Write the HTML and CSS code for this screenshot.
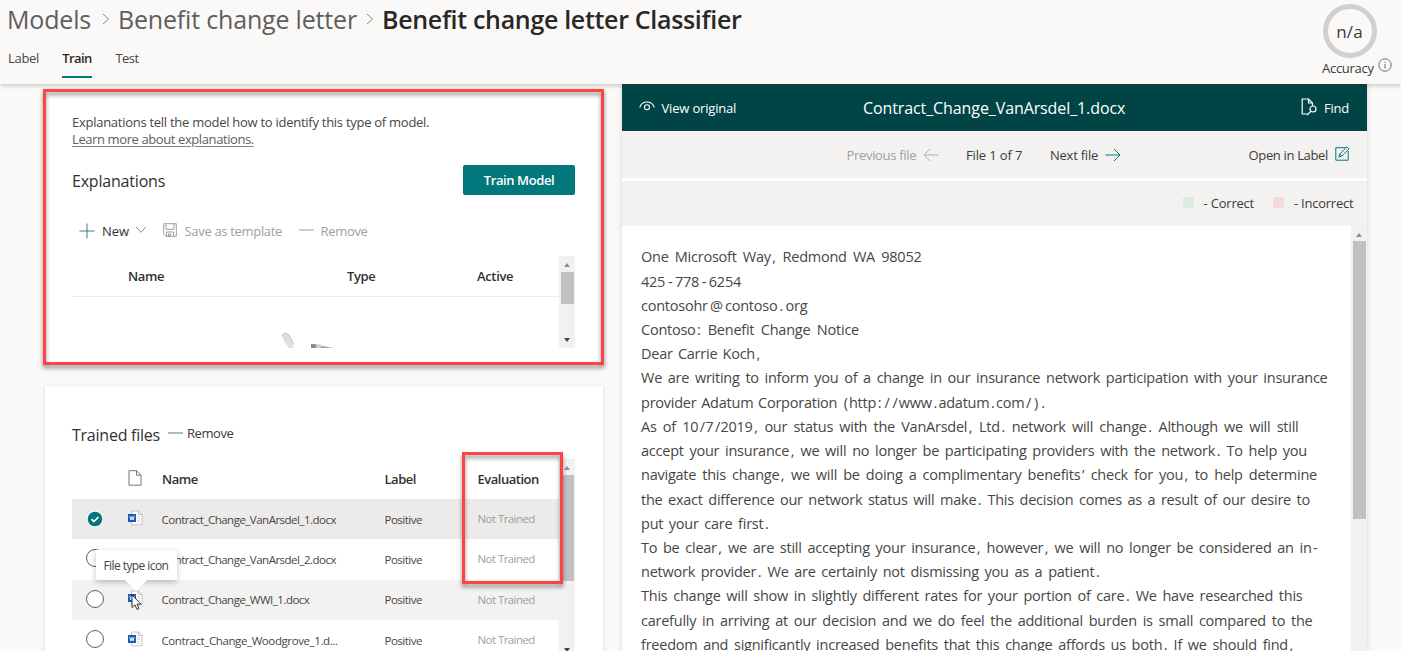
FILE: index.html
```
<!DOCTYPE html>
<html lang="en">
<head>
<meta charset="utf-8">
<title>Benefit change letter Classifier</title>
<link rel="stylesheet" href="styles.css">
</head>
<body>
<svg class="defs" width="0" height="0">
  <symbol id="word" viewBox="0 0 16 16">
    <path d="M4.500 1h7l3.500 3.500v10.300h-10.500z" fill="#fff" stroke="#b5b3b1" stroke-width=".8"/>
    <path d="M11.500 1v3.500h3.500" fill="none" stroke="#b5b3b1" stroke-width=".8"/>
    <path d="M10 6.500h3M10 8.500h3M10 10.500h3M10 12.500h3" stroke="#c8c6c4" stroke-width=".6"/>
    <rect x="1" y="4" width="8" height="8" fill="#185abd"/>
    <path d="M2.800 6l1.100 4L5 6.500 6.100 10l1.100-4" fill="none" stroke="#fff" stroke-width=".9"/>
  </symbol>
</svg>

<header class="top">
  <div class="top-left">
    <nav class="crumbs">
      <span class="crumb c-models">Models</span>
      <svg class="chev" viewBox="0 0 8 12"><path d="M1 1l5.500 5L1 11"/></svg>
      <span class="crumb c-letter">Benefit change letter</span>
      <svg class="chev" viewBox="0 0 8 12"><path d="M1 1l5.500 5L1 11"/></svg>
      <span class="crumb current">Benefit change letter Classifier</span>
    </nav>
    <div class="tabs">
      <span class="tab t-label">Label</span>
      <span class="tab t-train active">Train</span>
      <span class="tab t-test">Test</span>
    </div>
  </div>
  <div class="accuracy">
    <div class="ring">n/a</div>
    <div class="acc-row"><span>Accuracy</span>
      <svg class="info" viewBox="0 0 14 14"><circle cx="7" cy="7" r="6.200"/><path d="M7 6v4.500M7 3.600v1.200"/></svg>
    </div>
  </div>
</header>

<main class="page">
  <div class="left">
    <section class="card explain">
      <p class="intro">Explanations tell the model how to identify this type of model.</p>
      <p class="learn"><a>Learn more about explanations.</a></p>
      <div class="head"><h2>Explanations</h2><button class="train">Train Model</button></div>
      <div class="tools">
        <svg class="plus" viewBox="0 0 16 16"><path d="M8 .5v15M.5 8h15"/></svg>
        <span class="new">New</span>
        <svg class="down" viewBox="0 0 12 8"><path d="M1 1l5 5.300L11 1"/></svg>
        <svg class="save" viewBox="0 0 14 14"><path d="M.7.7h12.600v12.600H2.700l-2-2zM3 .7v5.600h8V.7M3.500 13.300V9h7v4.300M5.500 11v2.300h2V11z"/></svg>
        <span class="dis tmpl">Save as template</span>
        <svg class="minus grey" viewBox="0 0 15 2"><path d="M0 1h15"/></svg>
        <span class="dis rem">Remove</span>
      </div>
      <div class="xtable">
        <div class="xbody">
          <div class="xhead"><span>Name</span><span>Type</span><span>Active</span></div>
          <svg class="art" viewBox="0 0 64 17">
            <path d="M1 3.500C1 1 6 0 8 3l5 10-1 .5L9 8l4 9H9C5 13 2 8 1 3.500z" fill="#e1dfdd"/>
            <path d="M1 4C1 1 6 .5 8 3l5 9.500" fill="none" stroke="#b9b6b3" stroke-width=".8"/>
            <path d="M31 12l27 5H30z" fill="#aaa4a0"/>
            <path d="M30 12l5 .5-1 4.500h-4z" fill="#8a8886"/><path d="M36 12l4 .5v4.500h-5z" fill="#d2d0ce"/>
          </svg>
        </div>
        <div class="bar xbar"><i class="up"></i><b></b><i class="dn"></i></div>
      </div>
      <div class="mark mark-card"></div>
    </section>

    <section class="card files">
      <div class="fhead"><h2>Trained files</h2>
        <svg class="minus" viewBox="0 0 15 2"><path d="M0 1h15"/></svg><span class="frem">Remove</span></div>
      <div class="ftable">
        <div class="rows">
          <div class="row hrow"><span></span><span class="ic"><svg class="doc" viewBox="0 0 14 16"><path d="M1 .7h7.500l4.500 4.500v10H1zM8.500.7v4.500H13"/></svg></span><span>Name</span><span>Label</span><span class="ev">Evaluation</span></div>
          <div class="row sel"><span class="ck"><svg viewBox="0 0 18 18"><circle cx="9" cy="9" r="8.200" fill="#fff"/><circle cx="9" cy="9" r="7.300" fill="#03787c"/><path d="M5.500 9.200l2.400 2.400 4.600-4.600" fill="none" stroke="#fff" stroke-width="1.700"/></svg></span><span class="ic"><svg class="word"><use href="#word"/></svg></span><span class="fn">Contract_Change_VanArsdel_1.docx</span><span class="lb">Positive</span><span class="nt">Not Trained</span></div>
          <div class="row"><span class="ck"><em></em></span><span class="ic"><svg class="word"><use href="#word"/></svg></span><span class="fn">Contract_Change_VanArsdel_2.docx</span><span class="lb">Positive</span><span class="nt">Not Trained</span></div>
          <div class="row hov"><span class="ck"><em></em></span><span class="ic"><svg class="word"><use href="#word"/></svg></span><span class="fn">Contract_Change_WWI_1.docx</span><span class="lb">Positive</span><span class="nt">Not Trained</span>
            <div class="tip">File type icon</div>
            <svg class="cursor" viewBox="0 0 11 17"><path d="M1 1v12.500l3-2.700 2 4.700 2-.9-2-4.500h4z" fill="#fff" stroke="#222" stroke-width=".9"/></svg>
          </div>
          <div class="row"><span class="ck"><em></em></span><span class="ic"><svg class="word"><use href="#word"/></svg></span><span class="fn wood">Contract_Change_Woodgrove_1.d...</span><span class="lb">Positive</span><span class="nt">Not Trained</span></div>
        </div>
        <div class="bar fbar"><i class="up"></i><b></b><i class="dn"></i></div>
        <div class="mark mark-eval"></div>
      </div>
    </section>
  </div>

  <section class="viewer">
    <div class="vhead">
      <svg class="eye" viewBox="0 0 16 10"><path d="M.7 6.500C3-.8 13-.8 15.300 6.500"/><circle cx="8" cy="6.200" r="2.500"/></svg>
      <span class="vo">View original</span>
      <span class="vt">Contract_Change_VanArsdel_1.docx</span>
      <svg class="find" viewBox="0 0 17 18"><path d="M6.500 16H1.200V1h6.300l4 4v3M7.500 1v4h4"/><circle cx="12" cy="11" r="3"/><path d="M9.900 13.200L6.200 17"/></svg>
      <span class="vf">Find</span>
    </div>
    <div class="vnav">
      <span class="pf">Previous file</span>
      <svg class="arr off" viewBox="0 0 16 14"><path d="M15.500 7H1M7 1L1 7l6 6"/></svg>
      <span class="fo">File 1 of 7</span>
      <span class="nf">Next file</span>
      <svg class="arr" viewBox="0 0 16 14"><path d="M.5 7H15M9 1l6 6-6 6"/></svg>
      <span class="ol">Open in Label</span>
      <svg class="edit" viewBox="0 0 15 15"><path d="M10.500 1.700H.8v12.500h12.400V5M4 11l.8-3L12 .9l2 2L6.900 10zM4.800 8l2.100 2"/></svg>
    </div>
    <div class="legend"><i class="g"></i><span class="lc">- Correct</span><i class="r"></i><span class="li">- Incorrect</span></div>
    <div class="vbody">
      <div class="text">
        <p>One Microsoft Way<i>,</i> Redmond WA 98052</p>
        <p>425<i>-</i>778<i>-</i>6254</p>
        <p>contosohr<i>@</i>contoso<i>.</i>org</p>
        <p>Contoso<i>:</i> Benefit Change Notice</p>
        <p>Dear Carrie Koch<i>,</i></p>
        <p>We are writing to inform you of a change in our insurance network participation with your insurance</p>
        <p>provider Adatum Corporation <i>(</i>http<i>:</i><i>/</i><i>/</i>www<i>.</i>adatum<i>.</i>com<i>/</i><i>)</i><i>.</i></p>
        <p>As of 10<i>/</i>7<i>/</i>2019<i>,</i> our status with the VanArsdel<i>,</i> Ltd<i>.</i> network will change<i>.</i> Although we will still</p>
        <p>accept your insurance<i>,</i> we will no longer be participating providers with the network<i>.</i> To help you</p>
        <p>navigate this change<i>,</i> we will be doing a complimentary benefits<i>’</i> check for you<i>,</i> to help determine</p>
        <p>the exact difference our network status will make<i>.</i> This decision comes as a result of our desire to</p>
        <p>put your care first<i>.</i></p>
        <p>To be clear<i>,</i> we are still accepting your insurance<i>,</i> however<i>,</i> we will no longer be considered an in<i>-</i></p>
        <p>network provider<i>.</i> We are certainly not dismissing you as a patient<i>.</i></p>
        <p>This change will show in slightly different rates for your portion of care<i>.</i> We have researched this</p>
        <p>carefully in arriving at our decision and we do feel the additional burden is small compared to the</p>
        <p>freedom and significantly increased benefits that this change affords us both<i>.</i> If we should find<i>,</i></p>
      </div>
      <div class="bar vbar"><i class="up"></i><b></b></div>
    </div>
  </section>
</main>
</body>
</html>
```
FILE: styles.css
```
* { box-sizing: border-box; }
body { margin: 0; width: 1401px; height: 651px; overflow: hidden; background: #faf9f8; color: #3b3a39; font: 13px/18px "Open Sans", sans-serif; white-space: nowrap; }
p, h2 { margin: 0; }
svg { flex: none; display: block; fill: none; overflow: visible; }
.defs { position: absolute; }

.top { position: relative; z-index: 2; height: 84px; display: flex; justify-content: space-between; padding: 0 8px; background: #faf9f8; box-shadow: 0 2px 4px rgba(0,0,0,.18); }
.crumbs { display: flex; align-items: center; height: 40px; font-size: 25px; line-height: 40px; color: #605e5c; }
.crumb { flex: none; margin-top: -2px; }
.c-models { width: 95px; margin-left: -1px; letter-spacing: -.18px; }
.c-letter { width: 248px; letter-spacing: -.18px; }
.current { font-weight: 600; letter-spacing: -.32px; color: #292827; }
.chev { width: 8px; height: 12px; margin-top: -3px; stroke: #8a8886; stroke-width: 1; }
.chev + .crumb { margin-left: 8px; }
.tabs { display: flex; height: 38px; line-height: 36px; color: #484644; }
.tab { flex: none; letter-spacing: -.3px; }
.t-label { width: 54px; }
.t-train { width: 30px; text-align: center; font-weight: 600; letter-spacing: -.6px; color: #292827; border-bottom: 2px solid #03787c; }
.t-test { margin-left: 23.500px; letter-spacing: -.55px; }
.accuracy { width: 72px; }
.ring { width: 54px; height: 54px; margin: 4px 0 0 1.500px; border: 5px solid #d2d0ce; border-radius: 50%; text-align: center; font-size: 17px; line-height: 46px; letter-spacing: .1px; }
.acc-row { display: flex; align-items: center; height: 19px; letter-spacing: -.28px; padding-left: 1px; }
.acc-row span { width: 56px; }
.info { width: 14px; height: 14px; margin-top: -5px; stroke: #605e5c; stroke-width: .9; }

.page { display: flex; align-items: flex-start; padding-left: 45px; height: 567px; }
.left { width: 558px; margin-right: 19px; }
.card { position: relative; background: #fff; box-shadow: 0 1px 4px rgba(0,0,0,.14); padding: 0 28px 0 27px; }
.explain { margin-top: 6px; height: 273px; padding-top: 23px; }
.intro { letter-spacing: -.27px; line-height: 18px; color: #484644; }
.learn { letter-spacing: -.4px; line-height: 17px; color: #605e5c; }
.learn a { text-decoration: underline; text-decoration-color: #8a8886; text-underline-offset: 2px; }
h2 { font-size: 16px; font-weight: 400; letter-spacing: -.2px; line-height: 24px; color: #323130; }
.head { display: flex; align-items: center; justify-content: space-between; height: 30px; margin-top: 17px; }
.head h2 { margin-top: 2px; }
.train { width: 112px; height: 30px; border: 0; border-radius: 2px; background: #03787c; color: #fff; font: 600 13px/31px "Open Sans", sans-serif; letter-spacing: -.4px; padding: 0; }
.tools { display: flex; align-items: center; height: 20px; margin-top: 26px; padding-left: 7px; }
.plus { width: 16px; height: 16px; stroke: #3c7e80; stroke-width: 1; }
.new { width: 26px; margin-left: 7px; color: #323130; letter-spacing: -.1px; }
.down { width: 12px; height: 8px; margin: -3px 0 0 7px; stroke: #8a8886; }
.save { width: 14px; height: 14px; margin: -2px 0 0 16px; stroke: #a19f9d; }
.dis { color: #a19f9d; letter-spacing: -.32px; }
.tmpl { width: 98px; margin-left: 7.500px; }
.minus { width: 15px; height: 2px; stroke: #4f8586; stroke-width: 1; margin-top: -3px; }
.grey { stroke: #a19f9d; margin-left: 16px; }
.rem { margin-left: 7px; }
.xtable { display: flex; height: 92px; margin-top: 15px; }
.xbody { width: 487px; overflow: hidden; }
.xhead { display: grid; grid-template-columns: 219px 130px 1fr; padding-left: 56px; height: 41px; line-height: 40px; border-bottom: 1px solid #edebe9; font-weight: 600; letter-spacing: -.35px; color: #323130; }
.art { width: 64px; height: 17px; margin: 35px 0 0 209px; }

.bar { display: flex; flex-direction: column; align-items: center; background: #f1f1f1; flex: none; width: 16px; }
.bar b { width: 13px; background: #c1c1c1; }
.up, .dn { width: 0; height: 0; border: 3.500px solid transparent; }
.up { border-top: 0; border-bottom: 4px solid #8f8f8f; margin: 7px 0 5px; }
.dn { border-bottom: 0; border-top: 4px solid #444; margin: auto 0 6px; }
.xbar b { height: 32px; }
.mark { position: absolute; border: 3px solid #fd4344; filter: drop-shadow(0 3px 2px rgba(0,0,0,.45)); z-index: 3; }
.mark-card { left: -2px; top: -1px; width: 561px; height: 276px; }

.files { margin-top: 23px; height: 290px; padding-top: 36px; }
.fhead { display: flex; align-items: center; height: 24px; }
.fhead h2 { width: 96px; letter-spacing: -.24px; margin-top: 1px; }
.frem { margin-left: 4px; margin-top: -2px; letter-spacing: -.45px; }
.ftable { position: relative; display: flex; height: 197px; margin-top: 13px; }
.rows { width: 487px; }
.row { position: relative; display: grid; grid-template-columns: 46px 44px 222.500px 93px 1fr; align-items: center; height: 40.300px; font-size: 11.500px; letter-spacing: -.47px; color: #484644; }
.hrow { height: 40px; line-height: 38px; font-size: 13px; font-weight: 600; letter-spacing: -.48px; color: #323130; }
.sel { background: #edebe9; }
.hov { background: #f3f2f1; }
.row .ck, .row .ic { display: flex; justify-content: center; }
.row .ic { width: 34px; margin-top: -3px; }
.row .fn, .row .lb { padding-top: 1px; }
.row .fn { letter-spacing: -.51px; margin-left: -.5px; }
.row .wood { letter-spacing: -.4px; }
.hrow .ic { margin-top: 0; }
.ck svg { width: 18px; height: 18px; }
.ck em { width: 18px; height: 18px; margin-top: -2px; border: 1px solid #605e5c; border-radius: 50%; background: #fff; }
.word { width: 16px; height: 16px; }
.doc { width: 14px; height: 16px; margin-top: -2px; stroke: #797775; stroke-width: 1; }
.lb { letter-spacing: -.5px; }
.nt { color: #a19f9d; letter-spacing: -.57px; }
.fbar b { height: 106px; }
.fbar .dn { margin-bottom: 4px; }
.mark-eval { left: 390px; top: -7px; width: 101px; height: 132px; }
.tip { position: absolute; left: 23.500px; top: -29.500px; width: 81px; height: 30px; line-height: 31px; padding-left: 8px; font-size: 12px; letter-spacing: -.58px; background: #fff; box-shadow: 0 2px 6px rgba(0,0,0,.25); z-index: 2; }
.tip::after { content: ""; position: absolute; left: 29px; top: 30px; border: 11px solid transparent; border-top-color: #fff; border-bottom: 0; }
.cursor { position: absolute; left: 59px; top: 14px; width: 11px; height: 17px; z-index: 3; }

.viewer { width: 745px; height: 567px; background: #fff; box-shadow: 0 0 5px rgba(0,0,0,.15); }
.vhead { display: flex; align-items: center; height: 47px; background: #014446; color: #fff; padding-left: 17px; position: relative; z-index: 2; border-top: 1px solid #123c3d; }
.eye { width: 16px; height: 10px; stroke: #fff; stroke-width: 1.100; margin-top: -4px; }
.vo { width: 201.500px; margin-left: 6.500px; letter-spacing: -.18px; }
.vt { width: 438px; font-size: 16px; letter-spacing: -.1px; }
.find { width: 17px; height: 18px; stroke: #fff; stroke-width: 1.200; margin-top: -3px; }
.vf { margin-left: 6px; letter-spacing: -.25px; }
.vnav { display: flex; align-items: center; height: 47px; background: #f3f2f1; border-top: 1px solid #faf9f8; padding-left: 224.500px; line-height: 16px; padding-bottom: 1px; }
.pf { width: 76.500px; color: #a19f9d; letter-spacing: -.32px; }
.arr { width: 16px; height: 14px; stroke: #03787c; }
.off { stroke: #b3b0ad; }
.fo { width: 84px; margin-left: 27px; letter-spacing: -.14px; }
.nf { width: 55px; letter-spacing: -.24px; }
.ol { width: 86.500px; margin-left: 127.500px; letter-spacing: -.34px; }
.edit { width: 15px; height: 15px; stroke: #03787c; margin-top: -2px; }
.legend { display: flex; align-items: center; height: 45px; margin-top: 3px; background: #f3f2f1; padding-left: 561px; padding-bottom: 2px; }
.legend i { width: 11px; height: 11px; }
.g { background: #dfebdd; }
.r { background: #f3dadd; }
.lc { width: 69px; margin-left: 9.500px; letter-spacing: -.2px; }
.li { margin-left: 10.500px; letter-spacing: -.24px; }
.vbody { display: flex; height: 426px; }
.text { width: 729px; padding: 19.400px 0 0 19px; font-size: 14.500px; line-height: 24.220px; letter-spacing: -.24px; color: #484644; }
.text p { height: 24.220px; width: 280.500px; text-align-last: justify; }
.text i { font-style: normal; margin: 0 .5px 0 1.500px; }
.text p:nth-child(2) i { margin: 0 2.500px 0 2.800px; }
.text p:nth-child(3) i { margin: 0 2.300px 0 2.200px; }
.text p:nth-child(7) i { margin: 0 1.300px 0 1.700px; }
.text p:nth-child(4) { width: 218px; }
.text p:nth-child(5) { width: 119.500px; }
.text p:nth-child(6) { width: 686.500px; }
.text p:nth-child(7) { width: 405px; }
.text p:nth-child(8) { width: 657.500px; }
.text p:nth-child(9) { width: 666px; }
.text p:nth-child(10) { width: 676px; }
.text p:nth-child(11) { width: 669px; }
.text p:nth-child(12) { width: 128px; }
.text p:nth-child(13) { width: 677px; }
.text p:nth-child(14) { width: 459px; }
.text p:nth-child(15) { width: 661.500px; }
.text p:nth-child(16) { width: 671.500px; }
.text p:nth-child(17) { width: 652.500px; }
.text p:nth-child(2), .text p:nth-child(3) { text-align-last: left; }
.vbar b { height: 278px; }
.vbar .up { margin-bottom: 4px; }
```
